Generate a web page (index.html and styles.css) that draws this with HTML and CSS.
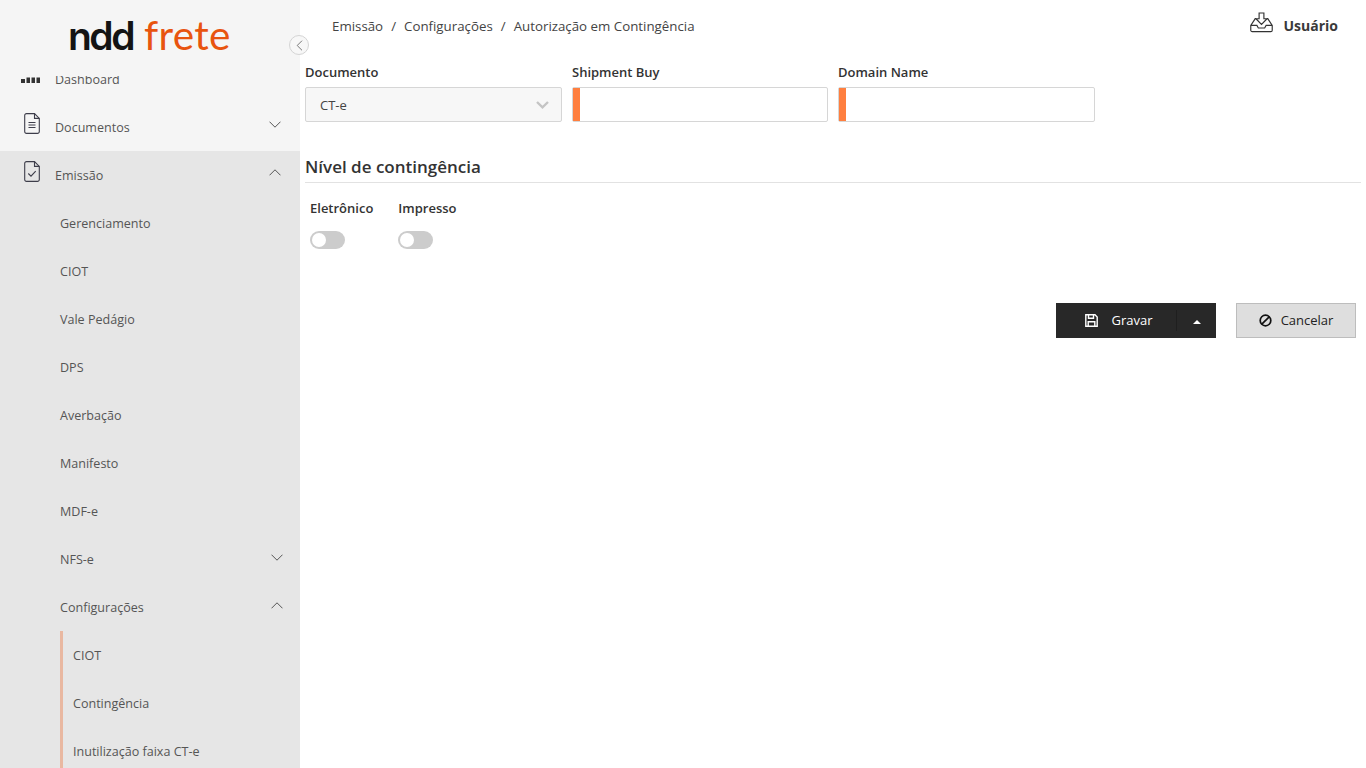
FILE: index.html
```html
<!DOCTYPE html>
<html lang="pt-BR">
<head>
<meta charset="utf-8">
<title>Autorização em Contingência</title>
<link rel="stylesheet" href="styles.css">
</head>
<body>
<div class="app">
  <aside class="sidebar">
    <div class="brand"><span class="brand-ndd">ndd</span><span class="brand-frete">frete</span></div>
    <nav class="nav">
      <a class="item top">
        <svg class="ico bars" width="20" height="8" viewBox="0 0 20 8"><path fill="#333" d="M0 4h4v4H0zM5.500 2.500h3.500V8H5.500zM10.500 2.500h3.500V8h-3.500zM15.500 2.500H19V8h-3.500z"/></svg>
        <span>Dashboard</span>
      </a>
      <a class="item top">
        <svg class="ico" width="16" height="21" viewBox="0 0 16 21" fill="none" stroke="#3d3d4a" stroke-width="1.100"><path d="M2.500.6h8l4.800 4.800v13.200a1.800 1.800 0 0 1-1.800 1.800h-11A1.800 1.800 0 0 1 .7 18.600V2.400A1.800 1.800 0 0 1 2.500.6z"/><path d="M10.500.6v4.800h4.800M4.500 9.500h7M4.500 12h7M4.500 14.500h7"/></svg>
        <span>Documentos</span>
        <svg class="chev" width="12" height="7" viewBox="0 0 12 7" fill="none" stroke="#555" stroke-width="1"><path d="M.5.700 6 6.200 11.500.700"/></svg>
      </a>
      <div class="group">
        <a class="item top">
          <svg class="ico" width="16" height="21" viewBox="0 0 16 21" fill="none" stroke="#3d3d4a" stroke-width="1.100"><path d="M2.500.6h8l4.800 4.800v13.200a1.800 1.800 0 0 1-1.800 1.800h-11A1.800 1.800 0 0 1 .7 18.600V2.400A1.800 1.800 0 0 1 2.500.6z"/><path d="M10.500.6v4.800h4.800M4.300 12.500l2.700 2.700 4.700-5"/></svg>
          <span>Emissão</span>
          <svg class="chev" width="12" height="7" viewBox="0 0 12 7" fill="none" stroke="#555" stroke-width="1"><path d="M.5 6.300 6 .8l5.500 5.500"/></svg>
        </a>
        <a class="item sub">Gerenciamento</a>
        <a class="item sub">CIOT</a>
        <a class="item sub">Vale Pedágio</a>
        <a class="item sub">DPS</a>
        <a class="item sub">Averbação</a>
        <a class="item sub">Manifesto</a>
        <a class="item sub">MDF-e</a>
        <a class="item sub"><span>NFS-e</span>
          <svg class="chev low" width="12" height="7" viewBox="0 0 12 7" fill="none" stroke="#555" stroke-width="1"><path d="M.5.700 6 6.200 11.500.700"/></svg>
        </a>
        <a class="item sub"><span>Configurações</span>
          <svg class="chev low" width="12" height="7" viewBox="0 0 12 7" fill="none" stroke="#555" stroke-width="1"><path d="M.5 6.300 6 .8l5.500 5.500"/></svg>
        </a>
        <div class="subsub">
          <a class="item leaf">CIOT</a>
          <a class="item leaf">Contingência</a>
          <a class="item leaf">Inutilização faixa CT-e</a>
        </div>
      </div>
    </nav>
  </aside>
  <button class="collapse" type="button" aria-label="Recolher menu">
    <svg width="7" height="11" viewBox="0 0 7 11" fill="none" stroke="#777" stroke-width="1"><path d="M6 .7 1.200 5.500 6 10.300"/></svg>
  </button>
  <main class="main">
    <header class="topbar">
      <div class="crumbs"><span>Emissão</span><i>/</i><span>Configurações</span><i>/</i><span>Autorização em Contingência</span></div>
      <div class="user">
        <svg width="23" height="21" viewBox="0 0 24 21" fill="none" stroke="#333" stroke-width="1.200"><path d="M9.500.6h5v6h3.300L12 12.500 6.200 6.600h3.300z"/><path d="M6.500 6.500H5.500L.8 13.500v5a1.500 1.500 0 0 0 1.500 1.500h19.400a1.500 1.500 0 0 0 1.500-1.500v-5L18.500 6.500h-1M.8 13.500h6.400l1.500 2.700h6.600l1.500-2.700h6.400"/></svg>
        <span>Usuário</span>
      </div>
    </header>
    <section class="fields">
      <div class="field">
        <label>Documento</label>
        <div class="select"><span>CT-e</span>
          <svg width="13" height="8" viewBox="0 0 13 8" fill="none" stroke="#c4c4c4" stroke-width="2.400"><path d="M1 1l5.500 5.300L12 1"/></svg>
        </div>
      </div>
      <div class="field">
        <label>Shipment Buy</label>
        <div class="input"></div>
      </div>
      <div class="field">
        <label>Domain Name</label>
        <div class="input"></div>
      </div>
    </section>
    <h2 class="section">Nível de contingência</h2>
    <section class="toggles">
      <div class="toggle-field"><label>Eletrônico</label><span class="toggle"></span></div>
      <div class="toggle-field"><label>Impresso</label><span class="toggle"></span></div>
    </section>
    <section class="actions">
      <div class="btn-split">
        <button class="btn-main" type="button">
          <svg width="13" height="13" viewBox="0 0 13 13" fill="none" stroke="#fff" stroke-width="1.400"><path d="M1 .8h9l2.200 2.200v9.200H.8V.8z"/><path d="M3.500 1v3.200h5V1M3.200 12V7.800h6.600V12"/></svg>
          <span>Gravar</span>
        </button>
        <button class="btn-caret" type="button" aria-label="Mais opções"><span class="caret"></span></button>
      </div>
      <button class="btn-cancel" type="button">
        <svg width="13" height="13" viewBox="0 0 13 13" fill="none" stroke="#111" stroke-width="1.700"><circle cx="6.500" cy="6.500" r="5.300"/><path d="M2.800 10.200l7.400-7.400"/></svg>
        <span>Cancelar</span>
      </button>
    </section>
  </main>
</div>
</body>
</html>
```
FILE: styles.css
```css
* { box-sizing: border-box; }
html, body { margin: 0; height: 100%; overflow: hidden; background: #fff; }
body { font-family: "Open Sans", "Noto Sans", sans-serif; font-size: 13px; color: #333; }
.app { display: flex; height: 768px; position: relative; overflow: hidden; }

.sidebar { width: 300px; flex: none; background: #f5f5f5; height: 768px; overflow: hidden; }
.brand { height: 76px; background: #f5f5f5; position: relative; z-index: 2; padding: 10px 0 0 68px; line-height: 50px; white-space: nowrap; font-family: "Lato", sans-serif; }
.brand-ndd { color: #141414; font-family: "Inter", sans-serif; font-weight: 600; font-size: 39px; letter-spacing: -2.500px; margin-right: 11px; }
.brand-frete { color: #e8540f; font-weight: 400; font-size: 40.500px; letter-spacing: 0.300px; }

.nav { margin-top: -21px; }
.item { display: flex; align-items: center; height: 48px; font-size: 12.550px; color: #555; position: relative; }
.top { padding-left: 55px; }
.ico { position: absolute; left: 24px; top: 10px; }
.ico.bars { left: 21px; top: 20px; }
.chev { position: absolute; left: 269px; top: 18px; }
.chev.low { top: 19px; left: 271px; }
.group { background: #e6e6e6; padding-bottom: 20px; }
.sub { padding-left: 60px; }
.subsub { margin-left: 60px; border-left: 3px solid #e9b8a1; }
.leaf { padding-left: 10px; }

.collapse { position: absolute; left: 289px; top: 35px; width: 20px; height: 20px; padding: 0; border: 1px solid #d4d4d4; border-radius: 50%; background: #f7f7f7; display: flex; align-items: center; justify-content: center; z-index: 3; }

.main { flex: 1; min-width: 0; padding: 0 5px; }
.topbar { height: 64px; display: flex; justify-content: space-between; padding: 12px 23px 0 27px; }
.crumbs { display: flex; height: 28px; align-items: center; font-size: 13.300px; color: #444; }
.crumbs i { font-style: normal; margin: 0 8px; }
.user { display: flex; align-items: flex-start; gap: 11px; font-size: 14px; font-weight: 700; color: #3a3a3a; height: 28px; }
.user span { line-height: 28px; }

.fields { display: flex; gap: 10px; }
.field { width: 257px; }
.field:nth-child(2) { width: 256px; }
.field:nth-child(3) { width: 257px; }
.field label { display: block; font-size: 13px; font-weight: 600; line-height: 17px; height: 23px; color: #333; }
.select { height: 35px; border: 1px solid #d6d6d6; background: #f7f7f7; display: flex; align-items: center; justify-content: space-between; padding: 0 12px 0 14px; color: #444; font-size: 13px; border-radius: 2px; }
.input { height: 35px; border: 1px solid #d6d6d6; background: #fff; border-radius: 2px; }
.input::before { content: ""; display: block; width: 7px; height: 100%; background: #ff7f3f; }

.section { margin: 33px 0 0; width: 1056px; height: 28px; font-size: 17px; font-weight: 600; line-height: 24px; color: #333; border-bottom: 1px solid #e2e2e2; }

.toggles { display: flex; gap: 25px; padding: 16px 0 0 5px; }
.toggle-field label { display: block; font-size: 13px; font-weight: 600; height: 32px; line-height: 18px; color: #333; }
.toggle { display: block; width: 35px; height: 18px; background: #ccc; border-radius: 9px; position: relative; }
.toggle::after { content: ""; position: absolute; left: 2px; top: 2px; width: 14px; height: 14px; background: #fff; border-radius: 50%; }

.actions { display: flex; justify-content: flex-end; gap: 20px; margin-top: 54px; padding-right: 5px; }
.btn-split { display: flex; width: 160px; height: 35px; background: #282828; }
.btn-main { width: 121px; border: 0; background: none; color: #fff; font: 13px "Open Sans", sans-serif; display: flex; align-items: center; justify-content: center; gap: 13px; padding: 0 0 2px 5px; position: relative; }
.btn-main svg { margin-top: 2px; }
.btn-main::after { content: ""; position: absolute; right: 0; top: 7px; height: 21px; width: 1px; background: #1f1f1f; }
.btn-caret { flex: 1; border: 0; background: none; display: flex; align-items: center; justify-content: center; padding: 2px 0 0; }
.caret { width: 0; height: 0; border: 4px solid transparent; border-top: 0; border-bottom-color: #fff; }
.btn-cancel { width: 120px; height: 35px; border: 1px solid #bdbdbd; background: #dedede; color: #222; font: 13px "Open Sans", sans-serif; display: flex; align-items: center; justify-content: center; gap: 9px; padding: 0 0 2px; }
.btn-cancel svg { margin-top: 2px; }
```
